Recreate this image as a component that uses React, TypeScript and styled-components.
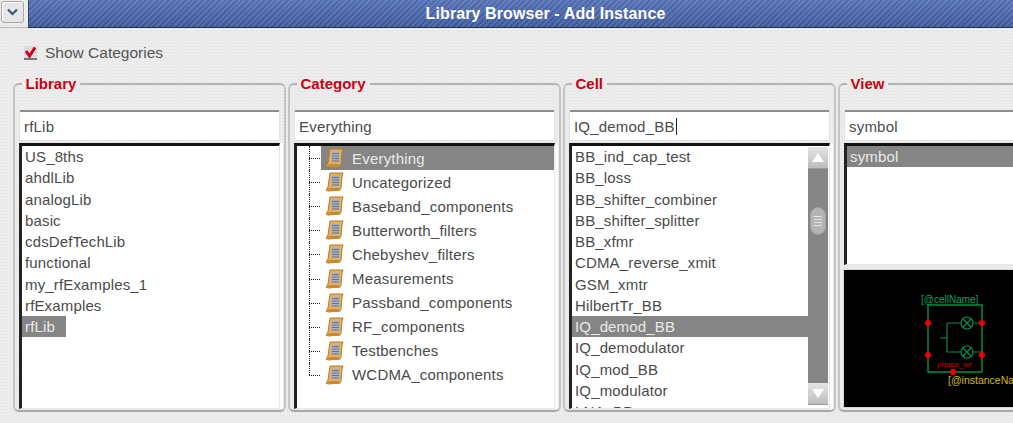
import React from "react";
import styled, { createGlobalStyle } from "styled-components";

const libraries = ["US_8ths", "ahdlLib", "analogLib", "basic", "cdsDefTechLib", "functional", "my_rfExamples_1", "rfExamples", "rfLib"];
const categories = ["Everything", "Uncategorized", "Baseband_components", "Butterworth_filters", "Chebyshev_filters", "Measurements", "Passband_components", "RF_components", "Testbenches", "WCDMA_components"];
const cells = ["BB_ind_cap_test", "BB_loss", "BB_shifter_combiner", "BB_shifter_splitter", "BB_xfmr", "CDMA_reverse_xmit", "GSM_xmtr", "HilbertTr_BB", "IQ_demod_BB", "IQ_demodulator", "IQ_mod_BB", "IQ_modulator", "LNA_BB"];

const GlobalStyle = createGlobalStyle`
    html, body {
        margin: 0;
        height: 100%;
        overflow: hidden;
        background: #ececec;
    }
`;

const Window = styled.div`
    width: 1062px;
    height: 423px;
    display: flex;
    flex-direction: column;
    font-family: "Liberation Sans", Arial, sans-serif;
    background-color: #ececec;
    background-image: radial-gradient(#e2e2e2 0.6px, transparent 0.8px);
    background-size: 3px 3px;
`;

const TitleBar = styled.div`
    height: 28px;
    flex: none;
    display: flex;
`;

const MenuCell = styled.div`
    width: 28px;
    display: flex;
    align-items: center;
    justify-content: center;
    padding: 0 4px 4px 0;
    box-sizing: border-box;
    border-bottom: 1px solid #b9b9b9;
`;

const MenuButton = styled.div`
    width: 21px;
    height: 20px;
    display: flex;
    align-items: center;
    justify-content: center;
    background: #e6e6e6;
    border: 1px solid #a8a8a8;
    border-radius: 3px;
    box-shadow: inset 1px 1px 0 #fff;
`;

const TitleText = styled.div`
    flex: 1;
    display: flex;
    align-items: center;
    justify-content: center;
    color: #fff;
    font-size: 16px;
    font-weight: 700;
    letter-spacing: 0.1px;
    background-color: #4866ab;
    background-image: repeating-linear-gradient(135deg, rgba(255, 255, 255, 0.09) 0 2px, rgba(0, 0, 0, 0.05) 2px 4px),
        linear-gradient(#5674b8, #3f5c9f);
    border-bottom: 1px solid #1f2f55;
    border-left: 1px solid #2c4273;
`;

const OptionRow = styled.label`
    display: flex;
    align-items: center;
    gap: 8px;
    height: 22px;
    margin: 14px 0 0 24px;
    color: #555;
    font-size: 15.5px;
`;

const Columns = styled.div`
    display: grid;
    grid-template-columns: 273px 273px 273px 210px;
    column-gap: 2px;
    margin: 11px 0 0 13px;
`;

const Group = styled.fieldset`
    margin: 0;
    padding: 17px 4px 0;
    min-width: 0;
    height: 337px;
    box-sizing: border-box;
    border: 2px solid #b4b4b4;
    border-color: #b4b4b4 #c4c4c4 #a9a9a9 #c4c4c4;
    border-radius: 6px;
    display: flex;
    flex-direction: column;
`;

const Legend = styled.legend`
    margin-left: 2.500px;
    padding: 0 4px;
    color: #cc0010;
    font-size: 15px;
    font-weight: 700;
    line-height: 18px;
`;

const Entry = styled.div`
    height: 31px;
    flex: none;
    box-sizing: border-box;
    display: flex;
    align-items: center;
    padding-left: 4px;
    background: #fff;
    border: 1px solid #e2e2e2;
    border-top: 2px solid #8e8e8e;
    border-radius: 2px;
    color: #4a4a4a;
    font-size: 15px;
    letter-spacing: 0.2px;
`;

const Caret = styled.span`
    width: 1px;
    height: 17px;
    margin-left: 1px;
    background: #222;
`;

const ListFrame = styled.div<{ $grow?: boolean }>`
    margin: 2px 0 1px;
    flex: ${(p) => (p.$grow ? "1" : "none")};
    height: ${(p) => (p.$grow ? "auto" : "118px")};
    min-height: 0;
    display: flex;
    overflow: hidden;
    background: #fff;
    border-style: solid;
    border-width: 3px 1px 1px 3px;
    border-color: #111 #e8e8e8 #e8e8e8 #222;
    box-shadow: 3px 0 0 #fbfbfb;
`;

const Rows = styled.div<{ $tree?: boolean }>`
    flex: 1;
    min-width: 0;
    overflow: hidden;
    padding-left: ${(p) => (p.$tree ? "24px" : "0")};
`;

const Row = styled.div<{ $selected?: boolean; $fit?: boolean }>`
    height: 21.25px;
    width: ${(p) => (p.$fit ? "44px" : "auto")};
    line-height: 21px;
    padding-left: 3px;
    box-sizing: border-box;
    font-size: 15px;
    letter-spacing: 0.15px;
    white-space: nowrap;
    color: ${(p) => (p.$selected ? "#eaeaea" : "#4a4a4a")};
    background: ${(p) => (p.$selected ? "#858585" : "transparent")};
`;

const TreeRow = styled.div<{ $selected?: boolean; $last?: boolean }>`
    position: relative;
    height: 24.1px;
    display: flex;
    align-items: center;
    gap: 8px;
    padding-left: 5px;
    font-size: 15px;
    letter-spacing: 0.2px;
    color: ${(p) => (p.$selected ? "#eaeaea" : "#4a4a4a")};
    background: ${(p) => (p.$selected ? "#858585" : "transparent")};

    &::before {
        content: "";
        position: absolute;
        left: -12px;
        top: 0;
        height: ${(p) => (p.$last ? "50%" : "100%")};
        border-left: 1px dotted #222;
    }

    &::after {
        content: "";
        position: absolute;
        left: -12px;
        top: 50%;
        width: 11px;
        border-top: 1px dotted #222;
    }
`;

const ScrollBar = styled.div`
    width: 20px;
    flex: none;
    margin: 1px 1px 3px 0;
    display: flex;
    flex-direction: column;
    background: #858585;
`;

const ScrollButton = styled.div`
    height: 21px;
    flex: none;
    display: flex;
    align-items: center;
    justify-content: center;
    background: linear-gradient(#e4e4e4, #bdbdbd);
    border-bottom: 1px solid #9a9a9a;
`;

const ScrollTrack = styled.div`
    flex: 1;
`;

const ScrollThumb = styled.div`
    width: 16px;
    height: 28px;
    margin: 38px auto 0;
    border-radius: 8px;
    background: #b4b4b4;
    border: 1px solid #a0a0a0;
    box-sizing: border-box;
    display: flex;
    flex-direction: column;
    justify-content: center;
    align-items: center;
    gap: 2px;
`;

const Grip = styled.span`
    width: 8px;
    height: 1px;
    background: #e6e6e6;
`;

const Preview = styled.div`
    margin: 3px 0 0 -1px;
    height: 139px;
    flex: none;
    background: #000;
    border: 1px solid #d8d8d8;
    box-sizing: border-box;
`;

const PreviewSvg = styled.svg`
    display: block;
`;

const ScrollIcon = () => (
    <svg width="18" height="20" viewBox="0 0 18 20">
        <path d="M4 1h13l-1 3-1 12-1 2-12 1-2-1 2-3z" fill="#e3ae5e" stroke="#b67a28" strokeWidth="1" />
        <path d="M1 17l3-1h9l1 2-2 1H3z" fill="#c98a34" />
        <rect x="5.500" y="4" width="8" height="10" fill="#a9b2c2" />
        <path d="M6 5.500h7M6 8h7M6 10.500h7M6 13h7" stroke="#66738f" strokeWidth="1" />
    </svg>
);

const SymbolDrawing = () => (
    <PreviewSvg width="170" height="137" viewBox="0 0 170 137">
        <text x="77" y="33" fontSize="10" fontFamily="Liberation Sans" fill="#0fa065">[@cellName]</text>
        <rect x="84" y="35" width="54" height="67" fill="none" stroke="#0a8a40" strokeWidth="1.500" />
        <path d="M96 68h7M103 53v29M103 53h14M103 82h14M129 53h9M129 82h9" fill="none" stroke="#0a8a40" strokeWidth="1.200" />
        <g fill="none" stroke="#0a8a55" strokeWidth="1.200">
            <circle cx="123" cy="53" r="6" />
            <circle cx="123" cy="82" r="6" />
            <path d="M119 49l8 8M127 49l-8 8M119 78l8 8M127 78l-8 8" />
        </g>
        <g fill="#ee0000">
            <circle cx="84" cy="53" r="3" />
            <circle cx="138" cy="53" r="3" />
            <circle cx="84" cy="85" r="3" />
            <circle cx="138" cy="85" r="3" />
            <circle cx="109" cy="102" r="3" />
        </g>
        <text x="93" y="97" fontSize="8" fontFamily="Liberation Sans" fill="#d00000">phase_wr</text>
        <text x="104" y="114" fontSize="10.500" fontFamily="Liberation Sans" fill="#d0bc00">[@instanceName]</text>
    </PreviewSvg>
);

export default function App() {
    return (
        <Window>
            <GlobalStyle />
            <TitleBar>
                <MenuCell>
                    <MenuButton>
                        <svg width="11" height="8" viewBox="0 0 11 8">
                            <path d="M1 1.500l4.500 4.500L10 1.500" fill="none" stroke="#3c5286" strokeWidth="2.200" />
                        </svg>
                    </MenuButton>
                </MenuCell>
                <TitleText>Library Browser - Add Instance</TitleText>
            </TitleBar>
            <OptionRow>
                <svg width="13" height="14" viewBox="0 0 13 14">
                    <rect x="0" y="0" width="13" height="14" fill="#dcdcdc" />
                    <rect x="0" y="12" width="13" height="2" fill="#777" />
                    <path d="M2 5l3.500 5L11 1.500" fill="none" stroke="#d0001c" strokeWidth="3" />
                </svg>
                Show Categories
            </OptionRow>
            <Columns>
                <Group>
                    <Legend>Library</Legend>
                    <Entry>rfLib</Entry>
                    <ListFrame $grow>
                        <Rows>
                            {libraries.map((name) => (
                                <Row key={name} $selected={name === "rfLib"} $fit={name === "rfLib"}>{name}</Row>
                            ))}
                        </Rows>
                    </ListFrame>
                </Group>
                <Group>
                    <Legend>Category</Legend>
                    <Entry>Everything</Entry>
                    <ListFrame $grow>
                        <Rows $tree>
                            {categories.map((name, i) => (
                                <TreeRow key={name} $selected={i === 0} $last={i === categories.length - 1}>
                                    <ScrollIcon />
                                    {name}
                                </TreeRow>
                            ))}
                        </Rows>
                    </ListFrame>
                </Group>
                <Group>
                    <Legend>Cell</Legend>
                    <Entry>IQ_demod_BB<Caret /></Entry>
                    <ListFrame $grow>
                        <Rows>
                            {cells.map((name) => (
                                <Row key={name} $selected={name === "IQ_demod_BB"}>{name}</Row>
                            ))}
                        </Rows>
                        <ScrollBar>
                            <ScrollButton>
                                <svg width="12" height="9" viewBox="0 0 12 9"><path d="M6 0l6 9H0z" fill="#fff" /></svg>
                            </ScrollButton>
                            <ScrollTrack>
                                <ScrollThumb>
                                    <Grip />
                                    <Grip />
                                    <Grip />
                                    <Grip />
                                </ScrollThumb>
                            </ScrollTrack>
                            <ScrollButton>
                                <svg width="12" height="9" viewBox="0 0 12 9"><path d="M0 0h12L6 9z" fill="#fff" /></svg>
                            </ScrollButton>
                        </ScrollBar>
                    </ListFrame>
                </Group>
                <Group>
                    <Legend>View</Legend>
                    <Entry>symbol</Entry>
                    <ListFrame>
                        <Rows>
                            <Row $selected>symbol</Row>
                        </Rows>
                    </ListFrame>
                    <Preview>
                        <SymbolDrawing />
                    </Preview>
                </Group>
            </Columns>
        </Window>
    );
}
